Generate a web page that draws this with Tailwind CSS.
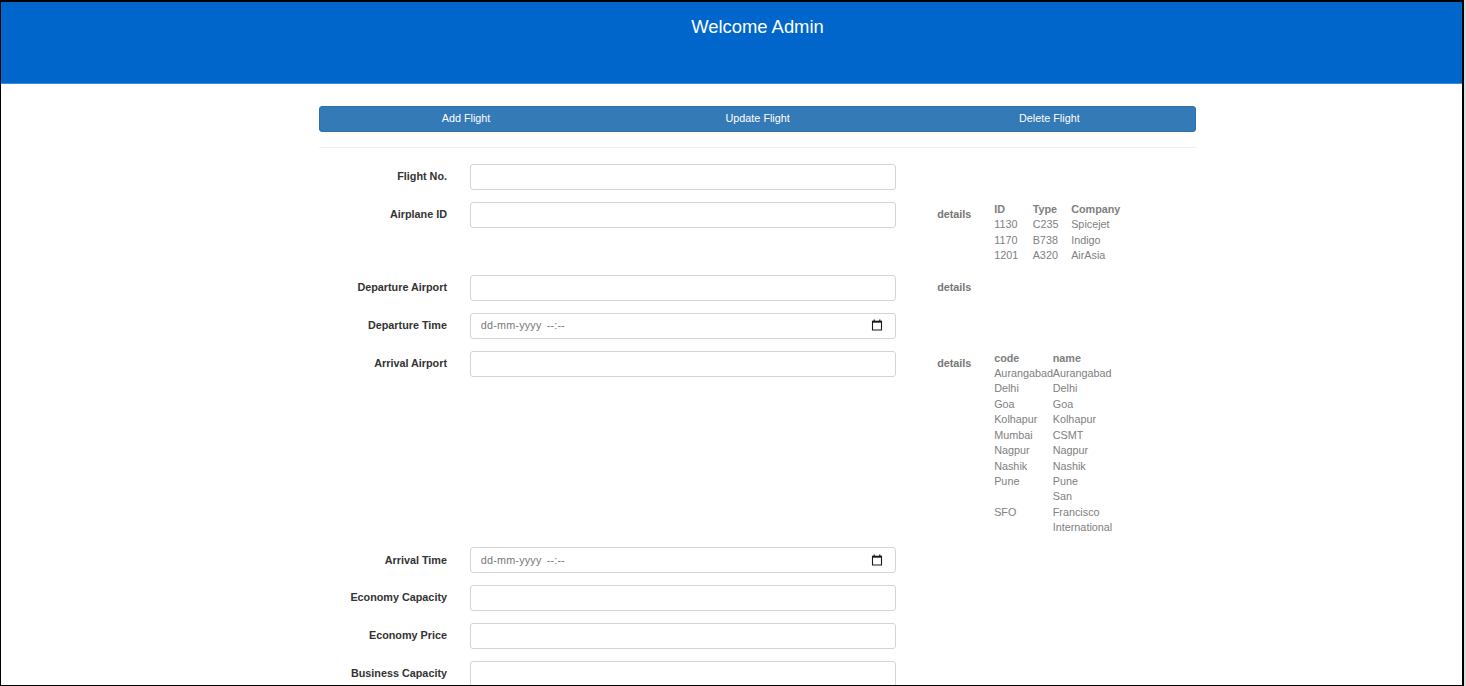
<!DOCTYPE html>
<html lang="en">
<head>
<meta charset="utf-8">
<title>Admin</title>
<script src="https://cdn.jsdelivr.net/npm/@tailwindcss/browser@4"></script>
</head>
<body class="bg-[#dcdcdc]">
<div class="w-[1464px] h-[686px] overflow-hidden border-black border-t-2 border-l border-r-2 border-b bg-white font-['Liberation_Sans',Arial,sans-serif] text-[10.8px] leading-[15.42px] text-[#333]">
  <header class="h-[81.5px] bg-[#0066cc] text-white text-center pt-[13px] pl-[52px] border-b border-[#3f8bd8]">
    <h1 class="text-[18.4px] leading-6">Welcome Admin</h1>
  </header>
  <main class="ml-[318.2px] w-[877px] pt-[22.7px]">
    <nav class="grid grid-cols-3 h-[26px] rounded-[3px] bg-[#337ab7] border border-[#2e70ab] text-white text-center leading-[22px]">
      <a>Add Flight</a><a>Update Flight</a><a>Delete Flight</a>
    </nav>
    <hr class="mt-[15px] mb-[15.8px] border-[#f0f0f0]">
    <form class="grid grid-cols-[127.8px_426.5px_52.3px_1fr] gap-x-[22.8px] gap-y-[11.6px] auto-rows-auto">
      <label class="text-right font-bold pt-[5.3px]">Flight No.</label>
      <div class="h-[26.2px] rounded-[3px] border border-[#d4d4d4]"></div><span></span><span></span>

      <label class="text-right font-bold pt-[5.3px]">Airplane ID</label>
      <div class="h-[26.2px] rounded-[3px] border border-[#d4d4d4]"></div>
      <label class="text-right font-bold pt-[5.3px] text-[#777]">details</label>
      <div class="grid grid-cols-[38.5px_38.5px_1fr] text-[#808080] content-start">
        <b>ID</b><b>Type</b><b>Company</b>
        <span>1130</span><span>C235</span><span>Spicejet</span>
        <span>1170</span><span>B738</span><span>Indigo</span>
        <span>1201</span><span>A320</span><span>AirAsia</span>
      </div>

      <label class="text-right font-bold pt-[5.3px]">Departure Airport</label>
      <div class="h-[26.2px] rounded-[3px] border border-[#d4d4d4]"></div>
      <label class="text-right font-bold pt-[5.3px] text-[#777]">details</label><span></span>

      <label class="text-right font-bold pt-[5.3px]">Departure Time</label>
      <div class="h-[26.2px] rounded-[3px] border border-[#d4d4d4] flex items-center justify-between pl-[10px] pr-[12px] text-[#777]">
        <span class="tracking-[0.2px] [word-spacing:2px]">dd-mm-yyyy --:--</span>
        <svg class="w-[12px] h-[12px] -mt-px" viewBox="0 0 12 12" fill="none" stroke="#1a1a1a"><path d="M1.5 2.5h9v8.5h-9z" stroke-width="1.1"/><path d="M1 2.7h10" stroke-width="2"/><path d="M3.2 0.5v2M8.8 0.5v2" stroke-width="1.2"/></svg>
      </div><span></span><span></span>

      <label class="text-right font-bold pt-[5.3px]">Arrival Airport</label>
      <div class="h-[26.2px] rounded-[3px] border border-[#d4d4d4]"></div>
      <label class="text-right font-bold pt-[5.3px] text-[#777]">details</label>
      <div class="grid grid-cols-[58.6px_64px] items-center text-[#808080] content-start">
        <b>code</b><b>name</b>
        <span>Aurangabad</span><span>Aurangabad</span>
        <span>Delhi</span><span>Delhi</span>
        <span>Goa</span><span>Goa</span>
        <span>Kolhapur</span><span>Kolhapur</span>
        <span>Mumbai</span><span>CSMT</span>
        <span>Nagpur</span><span>Nagpur</span>
        <span>Nashik</span><span>Nashik</span>
        <span>Pune</span><span>Pune</span>
        <span>SFO</span><span>San<br>Francisco<br>International</span>
      </div>

      <label class="text-right font-bold pt-[5.3px]">Arrival Time</label>
      <div class="h-[26.2px] rounded-[3px] border border-[#d4d4d4] flex items-center justify-between pl-[10px] pr-[12px] text-[#777]">
        <span class="tracking-[0.2px] [word-spacing:2px]">dd-mm-yyyy --:--</span>
        <svg class="w-[12px] h-[12px] -mt-px" viewBox="0 0 12 12" fill="none" stroke="#1a1a1a"><path d="M1.5 2.5h9v8.5h-9z" stroke-width="1.1"/><path d="M1 2.7h10" stroke-width="2"/><path d="M3.2 0.5v2M8.8 0.5v2" stroke-width="1.2"/></svg>
      </div><span></span><span></span>

      <label class="text-right font-bold pt-[5.3px]">Economy Capacity</label>
      <div class="h-[26.2px] rounded-[3px] border border-[#d4d4d4]"></div><span></span><span></span>

      <label class="text-right font-bold pt-[5.3px]">Economy Price</label>
      <div class="h-[26.2px] rounded-[3px] border border-[#d4d4d4]"></div><span></span><span></span>

      <label class="text-right font-bold pt-[5.3px]">Business Capacity</label>
      <div class="h-[26.2px] rounded-[3px] border border-[#d4d4d4]"></div><span></span><span></span>
    </form>
  </main>
</div>
</body>
</html>
